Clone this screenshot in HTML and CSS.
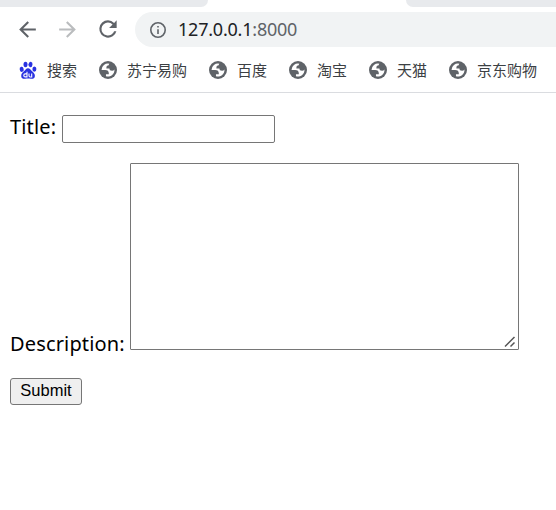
FILE: index.html
```html
<!DOCTYPE html>
<html lang="zh">
<head>
<meta charset="utf-8">
<title>127.0.0.1:8000</title>
<link rel="stylesheet" href="styles.css">
</head>
<body>
<svg class="defs" aria-hidden="true">
  <symbol id="globe" viewBox="2 2 20 20"><circle cx="12" cy="12" r="10"/><path fill="#fff" transform="translate(1.2 1.2) scale(.9)" d="M4 12h4.400c3.407.022 4.922 1.730 4.543 5.127H9.488v2.470a8.004 8.004 0 0 0 10.498-8.083C19.327 12.504 18.332 13 17 13c-2.137 0-3.206-.916-3.206-2.750h-3.748c-.274-2.728.683-4.092 2.870-4.092 0-.975.327-1.597.811-1.970A8.004 8.004 0 0 0 4 12z"/></symbol>
</svg>
<div class="tabs"><span class="tab tab-left"></span><span class="tab tab-right"></span></div>
<header class="toolbar">
  <svg class="nav" viewBox="0 0 24 24"><path d="M20 11H7.830l5.590-5.590L12 4l-8 8 8 8 1.410-1.410L7.830 13H20v-2z"/></svg>
  <svg class="nav disabled" viewBox="0 0 24 24"><path d="M12 4l-1.410 1.410L16.170 11H4v2h12.170l-5.580 5.590L12 20l8-8z"/></svg>
  <svg class="nav reload" viewBox="0 0 24 24"><path d="M17.650 6.350A7.960 7.960 0 0 0 12 4a8 8 0 1 0 7.730 10h-2.080A6 6 0 1 1 12 6c1.660 0 3.140.69 4.220 1.780L13 11h7V4l-2.350 2.350z"/></svg>
  <div class="address">
    <svg class="info" viewBox="2 2 20 20"><path d="M11 17h2v-6h-2v6zm1-15a10 10 0 1 0 0 20 10 10 0 0 0 0-20zm0 18a8 8 0 1 1 0-16 8 8 0 0 1 0 16zM11 9h2V7h-2v2z"/></svg>
    <span class="url">127.0.0.1<span class="port">:8000</span></span>
  </div>
</header>
<nav class="bookmarks">
  <a class="bookmark"><svg class="paw" viewBox="0 0 18 18"><g fill="#2932e1"><ellipse cx="2.700" cy="8.300" rx="2" ry="2.600" transform="rotate(-12 2.700 8.300)"/><ellipse cx="6.500" cy="3.500" rx="2" ry="2.800"/><ellipse cx="11.500" cy="3.500" rx="2" ry="2.800" transform="rotate(8 11.500 3.500)"/><ellipse cx="15.400" cy="8.100" rx="2" ry="2.600"/><path d="M9 7.200c1.800 0 2.700 1.600 3.800 2.800 1.500 1.500 3.300 2.500 3.100 5-.2 2.600-2.100 3-4 2.800-1.800-.3-3.900-.3-5.700 0-2 .2-3.900-.4-4-2.900-.1-2.400 1.700-3.400 3-4.800C6.400 8.900 7.200 7.200 9 7.200z"/></g><g fill="none" stroke="#fff" stroke-width="1.100"><path d="M8 10.700v5.200H6.200c-1.900 0-1.900-3 0-3H8M10 12.600v2.200c0 1 .4 1.200 1.200 1.200h1.500v-3.400"/></g></svg><span>搜索</span></a>
  <a class="bookmark"><svg class="globe"><use href="#globe"/></svg><span>苏宁易购</span></a>
  <a class="bookmark"><svg class="globe"><use href="#globe"/></svg><span>百度</span></a>
  <a class="bookmark"><svg class="globe"><use href="#globe"/></svg><span>淘宝</span></a>
  <a class="bookmark"><svg class="globe"><use href="#globe"/></svg><span>天猫</span></a>
  <a class="bookmark"><svg class="globe"><use href="#globe"/></svg><span>京东购物</span></a>
</nav>
<form class="page">
  <div class="row row-title"><label class="label-title" for="title">Title:</label><input id="title" type="text"></div>
  <div class="row row-desc"><label class="label-desc" for="description">Description:</label><div class="area"><textarea id="description"></textarea><svg class="grip" viewBox="0 0 12 12"><path d="M1 10.500 10.500 1M6.500 10.500l4-4"/></svg></div></div>
  <button type="button">Submit</button>
</form>
</body>
</html>
```
FILE: styles.css
```css
* { box-sizing: border-box; }
body { margin: 0; background: #fff; color: #000; overflow: hidden; font-family: "Noto Sans", "Noto Sans CJK SC", sans-serif; }
.defs { position: absolute; width: 0; height: 0; }
svg { display: block; flex: none; }
.tabs { display: flex; justify-content: space-between; height: 7px; }
.tab { background: #e8eaed; }
.tab-left { width: 208px; border-bottom-right-radius: 8px; }
.tab-right { width: 150px; border-bottom-left-radius: 8px; }
.toolbar { display: flex; align-items: center; height: 45px; padding-left: 15px; }
.nav { width: 25px; height: 25px; margin: -1px 15px 0 0; fill: #5f6368; }
.disabled { fill: #babcbe; }
.reload { width: 26px; height: 26px; margin-right: 14px; }
.address { display: flex; align-items: center; flex: 1; height: 35px; padding-left: 15px; border-radius: 18px 0 0 18px; background: #f1f3f4; }
.info { width: 16px; height: 16px; margin: 0 12px 0 0; fill: #5f6368; }
.url { margin-top: -2px; font-size: 18px; line-height: 24px; letter-spacing: -0.22px; color: #202124; }
.port { color: #5f6368; }
.bookmarks { display: flex; gap: 22px; height: 41px; padding: 9px 0 0 19px; border-bottom: 1px solid #dadce0; }
.bookmark { display: flex; align-items: center; gap: 10px; height: 18px; font: 15px/18px "Noto Sans CJK SC", sans-serif; color: #3c4043; white-space: nowrap; }
.paw { width: 18px; height: 18px; }
.globe { width: 18px; height: 18px; fill: #5f6368; }
.page { padding: 22px 10px 0; font-size: 20px; }
.row { display: flex; }
.row label { line-height: 28px; white-space: nowrap; letter-spacing: 0.15px; }
.row-title { height: 28px; align-items: center; }
.label-title { width: 52px; padding-bottom: 4px; }
.row-desc { height: 187px; margin-top: 20px; align-items: flex-end; }
.label-desc { width: 120px; margin-bottom: -8px; }
input { width: 213px; height: 28px; padding: 1px 3px; border: 1px solid #767676; border-radius: 2px; outline: 0; }
.area { position: relative; width: 389px; height: 187px; }
textarea { display: block; width: 100%; height: 100%; resize: none; border: 1px solid #767676; border-radius: 1px; outline: 0; }
.grip { position: absolute; right: 3px; bottom: 2px; width: 12px; height: 12px; fill: none; stroke: #555; stroke-width: 1.5; }
button { display: block; width: 72px; height: 27px; margin-top: 28px; padding: 0 0 3px; border: 1px solid #767676; border-radius: 3px; background: #efefef; color: #000; font: 16.5px/22px "Liberation Sans", sans-serif; }
```
